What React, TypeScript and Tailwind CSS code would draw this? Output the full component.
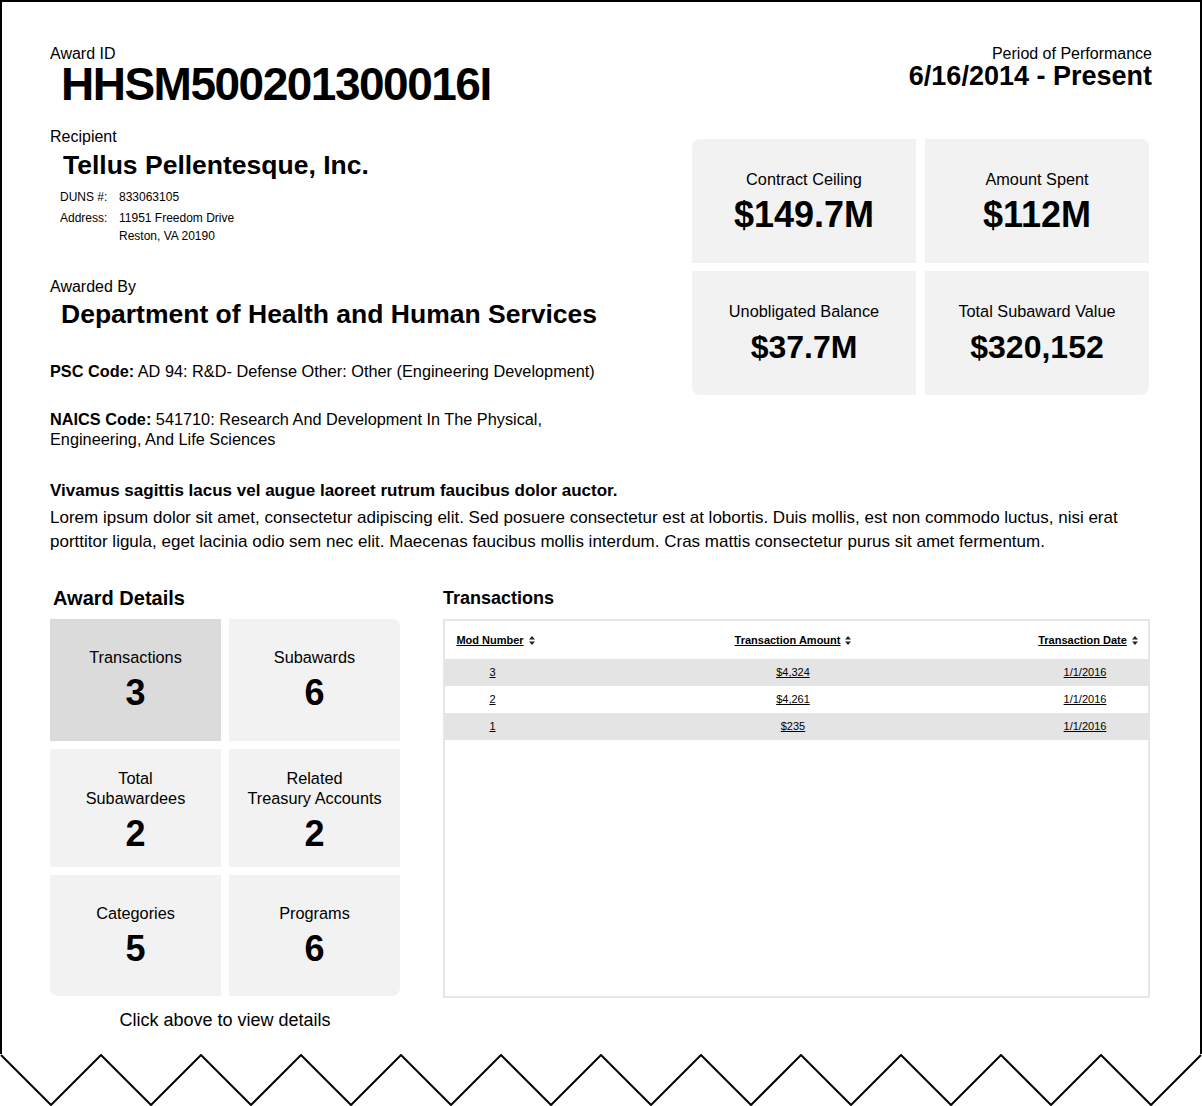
import React from 'react';

const stats = [
  { label: 'Contract Ceiling', value: '$149.7M', big: true, corner: 'rounded-tl-lg' },
  { label: 'Amount Spent', value: '$112M', big: true, corner: 'rounded-tr-lg' },
  { label: 'Unobligated Balance', value: '$37.7M', big: false, corner: 'rounded-bl-lg' },
  { label: 'Total Subaward Value', value: '$320,152', big: false, corner: 'rounded-br-lg' },
];

const transactions = [
  { mod: '3', amount: '$4,324', date: '1/1/2016' },
  { mod: '2', amount: '$4,261', date: '1/1/2016' },
  { mod: '1', amount: '$235', date: '1/1/2016' },
];

const SortIcon = () => (
  <svg width="6" height="9" viewBox="0 0 6 9" className="ml-[5px] inline-block">
    <path d="M3 0 L6 3.5 L0 3.5 Z" fill="#222" />
    <path d="M3 9 L6 5.5 L0 5.5 Z" fill="#222" />
  </svg>
);

const Zigzag = () => {
  // teeth every 100px, 50px deep
  const pts: string[] = [];
  for (let i = 0; i <= 24; i++) {
    pts.push(`${1 + i * 50},${i % 2 === 0 ? 1 : 51}`);
  }
  return (
    <svg width="1202" height="52" viewBox="0 0 1202 52" className="block">
      <polyline points={pts.join(' ')} fill="white" stroke="black" strokeWidth="2" />
    </svg>
  );
};

type TileProps = { label: React.ReactNode; value: string; active?: boolean; className: string };

const Tile = ({ label, value, active, className }: TileProps) => (
  <div className={`${className} flex flex-col items-center justify-center ${active ? 'bg-[#dbdbdb]' : 'bg-[#f2f2f2]'}`}>
    <div className="text-[16.3px] leading-[20px] text-center">{label}</div>
    <div className="text-[36px] leading-[40px] font-bold mt-[6px]">{value}</div>
  </div>
);

export default function App() {
  return (
    <div className="w-[1202px] bg-white text-black" style={{ fontFamily: '"Liberation Sans", Arial, sans-serif' }}>
      <div className="h-[1054px] border-2 border-b-0 border-black px-[48px] pt-[42px]">
        {/* header */}
        <div className="flex justify-between items-start">
          <div>
            <div className="text-[16px] leading-[20px]">Award ID</div>
            <div className="text-[46px] leading-[40px] font-bold tracking-[-1.5px] ml-[11px]">HHSM500201300016I</div>
          </div>
          <div className="text-right">
            <div className="text-[16px] leading-[20px]">Period of Performance</div>
            <div className="text-[27px] leading-[24px] font-bold">6/16/2014 - Present</div>
          </div>
        </div>

        {/* recipient + stats */}
        <div className="flex justify-between items-start">
          <div className="w-[560px]">
            <div className="text-[16px] leading-[20px] mt-[23px]">Recipient</div>
            <div className="text-[26.5px] leading-[30px] font-bold ml-[13px] mt-[3px]">Tellus Pellentesque, Inc.</div>
            <div className="ml-[10px] mt-[8px] text-[12px] leading-[18px]">
              <div className="flex">
                <span className="w-[59px]">DUNS #:</span>
                <span>833063105</span>
              </div>
              <div className="flex mt-[3px]">
                <span className="w-[59px]">Address:</span>
                <span>
                  11951 Freedom Drive
                  <br />
                  Reston, VA 20190
                </span>
              </div>
            </div>
            <div className="text-[16px] leading-[20px] mt-[32px]">Awarded By</div>
            <div className="text-[26.5px] leading-[30px] font-bold ml-[11px] mt-[2px] whitespace-nowrap">Department of Health and Human Services</div>
            <div className="text-[16.3px] leading-[20px] mt-[32px] whitespace-nowrap">
              <span className="font-bold">PSC Code:</span> AD 94: R&amp;D- Defense Other: Other (Engineering Development)
            </div>
            <div className="text-[16.3px] leading-[20px] mt-[28px] w-[540px]">
              <span className="font-bold">NAICS Code:</span> 541710: Research And Development In The Physical, Engineering, And Life Sciences
            </div>
          </div>
          <div className="w-[457px] mr-[3px] mt-[35px] grid grid-cols-2 gap-x-[9px] gap-y-[8px]">
            {stats.map((s) => (
              <div key={s.label} className={`h-[124px] bg-[#f2f2f2] ${s.corner} flex flex-col items-center pt-[30px]`}>
                <div className="text-[16.3px] leading-[20px]">{s.label}</div>
                {s.big ? (
                  <div className="text-[36px] leading-[36px] font-bold mt-[8px]">{s.value}</div>
                ) : (
                  <div className="text-[32px] leading-[36px] font-bold mt-[8px]">{s.value}</div>
                )}
              </div>
            ))}
          </div>
        </div>

        {/* description */}
        <div className="text-[17px] leading-[20px] font-bold mt-[32px]">Vivamus sagittis lacus vel augue laoreet rutrum faucibus dolor auctor.</div>
        <p className="text-[17px] leading-[24px] mt-[5px]">
          Lorem ipsum dolor sit amet, consectetur adipiscing elit. Sed posuere consectetur est at lobortis. Duis mollis, est non commodo luctus, nisi erat porttitor ligula, eget lacinia odio sem nec elit. Maecenas faucibus mollis interdum. Cras mattis consectetur purus sit amet fermentum.
        </p>

        {/* award details + transactions */}
        <div className="flex gap-[43px] mt-[32px]">
          <div className="w-[350px]">
            <div className="text-[20px] leading-[24px] font-bold ml-[3px]">Award Details</div>
            <div className="grid grid-cols-2 gap-x-[8px] gap-y-[8px] mt-[9px]">
              <Tile className="h-[122px]" label="Transactions" value="3" active />
              <Tile className="h-[122px] rounded-tr-lg" label="Subawards" value="6" />
              <Tile className="h-[118px] pt-[6px]" label={<>Total<br />Subawardees</>} value="2" />
              <Tile className="h-[118px] pt-[6px]" label={<>Related<br />Treasury Accounts</>} value="2" />
              <Tile className="h-[121px] rounded-bl-lg" label="Categories" value="5" />
              <Tile className="h-[121px] rounded-br-lg" label="Programs" value="6" />
            </div>
            <div className="text-[18px] leading-[22px] text-center mt-[13px]">Click above to view details</div>
          </div>

          <div className="w-[707px]">
            <div className="text-[18px] leading-[24px] font-bold">Transactions</div>
            <div className="mt-[9px] h-[379px] border-2 border-[#e6e6e6]">
              <div className="grid grid-cols-[95px_1fr_110px] pr-[8px] h-[38px] items-center text-[11px] font-bold">
                <div className="text-center pl-[6px]"><span className="underline">Mod Number</span><SortIcon /></div>
                <div className="text-center pl-[16px]"><span className="underline">Transaction Amount</span><SortIcon /></div>
                <div className="text-center pl-[6px]"><span className="underline">Transaction Date</span><SortIcon /></div>
              </div>
              {transactions.map((t, i) => (
                <div
                  key={t.mod}
                  className={`grid grid-cols-[95px_1fr_110px] pr-[8px] h-[27px] items-center text-[11px] ${i % 2 === 0 ? 'bg-[#e4e4e4]' : 'bg-white'}`}
                >
                  <div className="text-center underline">{t.mod}</div>
                  <div className="text-center pl-[16px] underline">{t.amount}</div>
                  <div className="text-center underline">{t.date}</div>
                </div>
              ))}
            </div>
          </div>
        </div>
      </div>
      <Zigzag />
    </div>
  );
}
